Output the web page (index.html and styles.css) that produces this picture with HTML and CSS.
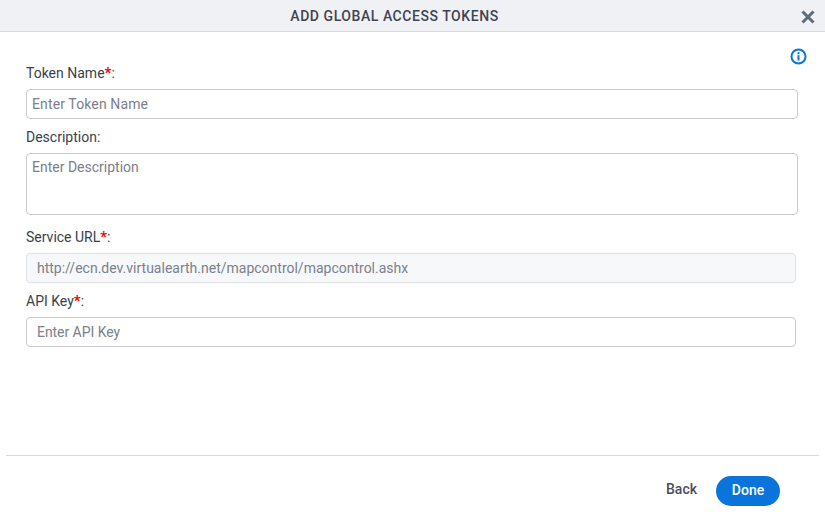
FILE: index.html
```html
<!DOCTYPE html>
<html lang="en">
<head>
<meta charset="utf-8">
<title>Add Global Access Tokens</title>
<link rel="stylesheet" href="styles.css">
</head>
<body>
<div class="dialog">
  <header class="header">
    <h1 class="title">ADD GLOBAL ACCESS TOKENS</h1>
    <button class="close" aria-label="Close">
      <svg width="14" height="14" viewBox="0 0 14 14"><path d="M1.5 1.5 12.5 12.5M12.5 1.5 1.5 12.5" stroke="#5f6a7d" stroke-width="3" fill="none"/></svg>
    </button>
  </header>
  <main class="body">
    <div class="info-row">
      <svg width="17" height="17" viewBox="0 0 17 17"><circle cx="8.5" cy="8.5" r="7" fill="none" stroke="#0a74da" stroke-width="2"/><rect x="7.5" y="7.2" width="2" height="5.3" fill="#0a74da"/><rect x="7.5" y="4.2" width="2" height="2" fill="#0a74da"/></svg>
    </div>
    <div class="label l-name">Token Name<span class="req">*</span>:</div>
    <input class="field f-name" placeholder="Enter Token Name">
    <div class="label l-desc">Description:</div>
    <textarea class="field f-desc" placeholder="Enter Description"></textarea>
    <div class="label l-url">Service URL<span class="req">*</span>:</div>
    <input class="field wide f-url" disabled value="http://ecn.dev.virtualearth.net/mapcontrol/mapcontrol.ashx">
    <div class="label l-key">API Key<span class="req">*</span>:</div>
    <input class="field wide f-key" placeholder="Enter API Key">
  </main>
  <footer class="footer">
    <button class="back">Back</button>
    <button class="done">Done</button>
  </footer>
</div>
</body>
</html>
```
FILE: styles.css
```css
* { box-sizing: border-box; }
html, body { margin: 0; height: 100%; background: #fff; }
body { font-family: Roboto, "Liberation Sans", sans-serif; color: #3a3f4b; overflow: hidden; }
.dialog { width: 825px; height: 520px; display: flex; flex-direction: column; }
.header { height: 32px; flex: none; background: #f0f1f4; border-bottom: 1px solid #d8d9de; display: flex; align-items: center; justify-content: center; position: relative; }
.title { margin: 0; font-size: 14px; font-weight: 500; color: #3f4452; letter-spacing: 0.55px; line-height: 32px; position: relative; left: -18px; }
.close { position: absolute; left: 801px; top: 10px; width: 14px; height: 14px; padding: 0; border: 0; background: none; display: flex; }
.body { flex: 1; padding: 0 27px 0 26px; display: flex; flex-direction: column; }
.info-row { height: 17px; margin-top: 16px; display: flex; justify-content: flex-end; margin-right: -9px; }
.label { font-size: 14px; line-height: 16px; color: #3a3f4b; }
.req { color: #f00; font-weight: 700; font-size: 15px; line-height: 14px; }
.l-name { margin-top: 0; }
.l-desc { margin-top: 10px; }
.l-url { margin-top: 14px; }
.l-key { margin-top: 10px; }
.field { display: block; border: 1px solid #c9cad0; border-radius: 4px; font-family: inherit; font-size: 14px; color: #7b818c; background: #fff; outline: none; width: 772px; margin-top: 8px; }
.field::placeholder { color: #7b808a; opacity: 1; }
.f-name { height: 30px; padding: 0 5px; letter-spacing: 0.12px; }
.f-desc { height: 62px; padding: 4px 5px; resize: none; line-height: 18px; }
.wide { width: 770px; padding: 0 10px; height: 30px; }
.f-key { letter-spacing: -0.05px; }
.f-url { background: #f7f8fa; border-color: #e0e1e5; }
.footer { height: 65px; flex: none; margin: 0 6px; border-top: 1px solid #d8d9de; display: flex; align-items: center; justify-content: flex-end; padding: 6px 39px 0 0; }
.back { border: 0; background: none; padding: 0 0 4px; font-family: inherit; font-size: 14px; font-weight: 500; color: #4a4f5c; margin-right: 19px; }
.done { width: 64px; height: 30px; border: 0; border-radius: 15px; background: #0a74da; color: #fff; font-family: inherit; font-size: 14px; font-weight: 500; padding: 0 0 2px; }
```
